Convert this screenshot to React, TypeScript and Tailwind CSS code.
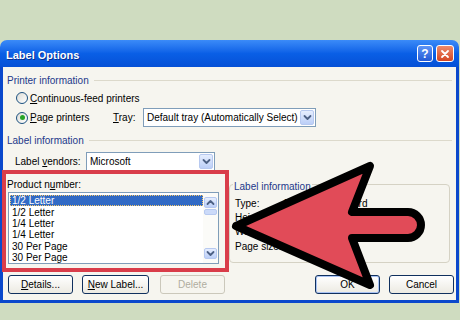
import React from "react";

const Chevron = ({ up = false }: { up?: boolean }) => (
  <svg width="9" height="7" viewBox="0 0 9 7" className={up ? "rotate-180" : ""}>
    <path d="M1.5 2 L4.5 5 L7.5 2" fill="none" stroke="#4d6185" strokeWidth="1.8" strokeLinecap="round" strokeLinejoin="round" />
  </svg>
);

const ArrowBox = ({ up = false, className = "" }: { up?: boolean; className?: string }) => (
  <div className={`flex items-center justify-center rounded-[2px] border border-[#b7c9f0] bg-gradient-to-b from-[#e6eefe] to-[#bccff8] ${className}`}>
    <Chevron up={up} />
  </div>
);

const Combo = ({ text, className = "" }: { text: string; className?: string }) => (
  <div className={`flex h-[19px] items-center border border-[#7f9db9] bg-white ${className}`}>
    <span className="flex-1 truncate pl-[3px]">{text}</span>
    <ArrowBox className="mr-[1px] h-[15px] w-[14px]" />
  </div>
);

const Radio = ({ checked = false }: { checked?: boolean }) => (
  <div className="flex h-[12px] w-[12px] items-center justify-center rounded-full border border-[#1c5180] bg-gradient-to-br from-[#dcdcd6] to-white">
    {checked && <div className="h-[5px] w-[5px] rounded-full bg-[#28a428]" />}
  </div>
);

const GroupLabel = ({ text }: { text: string }) => (
  <div className="flex h-[12px] items-center gap-[5px] pl-[4px] pr-[4px]">
    <span className="text-[#22388a]">{text}</span>
    <div className="h-px flex-1 bg-[#dcd9cb]" />
  </div>
);

const XpButton = ({
  children,
  className = "",
  disabled = false,
}: {
  children: React.ReactNode;
  className?: string;
  disabled?: boolean;
}) => (
  <div
    className={`flex h-[19px] w-[65px] items-center justify-center rounded-[3px] border ${
      disabled
        ? "border-[#cbc8bb] bg-[#f6f5ef] text-[#b0ad9f]"
        : "border-[#10305e] bg-gradient-to-b from-white to-[#eceae2]"
    } ${className}`}
  >
    {children}
  </div>
);

const products = ["1/2 Letter", "1/2 Letter", "1/4 Letter", "1/4 Letter", "30 Per Page", "30 Per Page"];

const info = [
  { k: "Type:", v: "1/2 Letter Postcard" },
  { k: "Height:", v: '5.5"' },
  { k: "Width:", v: '8.5"' },
  { k: "Page size:", v: '8.5" x 11"' },
];

export default function App() {
  return (
    <div className="relative h-[320px] w-[460px] overflow-hidden bg-[#cfdcc0] pt-[40px] text-[10px] text-black [font-family:'Liberation_Sans',Arial,sans-serif]">
      <div className="flex h-[263px] w-[459px] flex-col">
        {/* title bar */}
        <div className="flex h-[27px] items-center rounded-t-[7px] bg-gradient-to-b from-[#3b8bf8] via-[#0a5fe6] to-[#0650d6] pl-[6px] pr-[5px]">
          <span className="mt-[3px] flex-1 text-[11px] font-bold text-white [text-shadow:1px_1px_0_#0a2f8f]">Label Options</span>
          <div className="flex h-[17px] w-[16px] items-center justify-center rounded-[3px] border border-white bg-gradient-to-b from-[#5f95f6] to-[#2359d6] text-[12px] font-bold text-white">
            ?
          </div>
          <div className="ml-[3px] flex h-[17px] w-[18px] items-center justify-center rounded-[3px] border border-white bg-gradient-to-b from-[#ed8a6a] to-[#d4441f]">
            <svg width="10" height="10" viewBox="0 0 10 10">
              <path d="M2 2 L8 8 M8 2 L2 8" stroke="white" strokeWidth="1.8" strokeLinecap="round" />
            </svg>
          </div>
        </div>

        {/* body */}
        <div className="flex flex-1 flex-col border-x-[3px] border-b-[3px] border-[#0a48cc] bg-[#f6f5ef]">
          <div className="mt-[7px]">
            <GroupLabel text="Printer information" />
          </div>
          <div className="ml-[13px] mt-[6px] flex h-[12px] items-center gap-[2px]">
            <Radio />
            <span>
              <u>C</u>ontinuous-feed printers
            </span>
          </div>
          <div className="ml-[13px] mt-[4px] flex h-[19px] items-center">
            <Radio checked />
            <span className="ml-[2px] w-[83px]">
              <u>P</u>age printers
            </span>
            <span className="w-[30px]">
              <u>T</u>ray:
            </span>
            <Combo text="Default tray (Automatically Select)" className="w-[173px]" />
          </div>
          <div className="mt-[7px]">
            <GroupLabel text="Label information" />
          </div>
          <div className="ml-[12px] mt-[6px] flex h-[19px] items-center">
            <span className="w-[71px]">
              Label <u>v</u>endors:
            </span>
            <Combo text="Microsoft" className="w-[129px]" />
          </div>

          <div className="mt-[7px] flex">
            <div className="ml-[4px] flex w-[212px] flex-col">
              <div className="flex h-[12px] items-center">
                Product n<u>u</u>mber:
              </div>
              <div className="mt-[2px] ml-[1px] flex h-[72px] border border-[#7f9db9] bg-white">
                <div className="flex-1 pl-[1px] pt-[2px]">
                  {products.map((p, i) => (
                    <div
                      key={i}
                      className={`flex h-[11.4px] items-center pl-[2px] ${
                        i === 0 ? "bg-[#316ac5] text-white outline-1 outline-dotted outline-[#f5c86a] -outline-offset-1" : ""
                      }`}
                    >
                      {p}
                    </div>
                  ))}
                </div>
                <div className="flex w-[15px] flex-col items-center bg-[#fbfbf8] py-[4px]">
                  <ArrowBox up className="h-[11px] w-[13px]" />
                  <div className="mt-[1px] h-[6px] w-[13px] rounded-[2px] border border-[#b7c9f0] bg-[#cbdaf9]" />
                  <div className="flex-1" />
                  <ArrowBox className="h-[11px] w-[13px]" />
                </div>
              </div>
            </div>

            <div className="relative ml-[10px] mt-[6px] h-[79px] w-[221px] rounded-[4px] border border-[#d5d2c4] pl-[5px] pt-[11px]">
              <span className="absolute -top-[6px] left-[3px] bg-[#f6f5ef] px-px text-[#22388a]">Label information</span>
              {info.map((r, i) => (
                <div key={i} className={`flex h-[14px] items-center ${i === 3 ? "mt-[1px]" : ""}`}>
                  <span className="w-[48px]">{r.k}</span>
                  <span>{r.v}</span>
                </div>
              ))}
            </div>
          </div>

          <div className="ml-[5px] mt-[11px] flex h-[19px] items-center">
            <XpButton>
              <span>
                <u>D</u>etails...
              </span>
            </XpButton>
            <XpButton className="ml-[9px] w-[67px]">
              <span>
                <u>N</u>ew Label...
              </span>
            </XpButton>
            <XpButton disabled className="ml-[11px] w-[63px]">
              Delete
            </XpButton>
            <XpButton className="ml-[90px] shadow-[inset_0_0_0_1px_#a9c3f3]">OK</XpButton>
            <XpButton className="ml-[9px]">Cancel</XpButton>
          </div>
        </div>
      </div>

      {/* red highlight box */}
      <div className="absolute left-[2px] top-[170px] h-[102px] w-[227px] border-[4px] border-[#d93d4a]" />

      {/* big arrow */}
      <svg className="pointer-events-none absolute left-0 top-0" width="460" height="320" viewBox="0 0 460 320">
        <path
          d="M236 226 L370 166 L352 212 L408 212 A13 13 0 0 1 408 238 L352 238 L370 285 Z"
          fill="#e14b58"
          stroke="#000"
          strokeWidth="8"
          strokeLinejoin="round"
        />
      </svg>
    </div>
  );
}
